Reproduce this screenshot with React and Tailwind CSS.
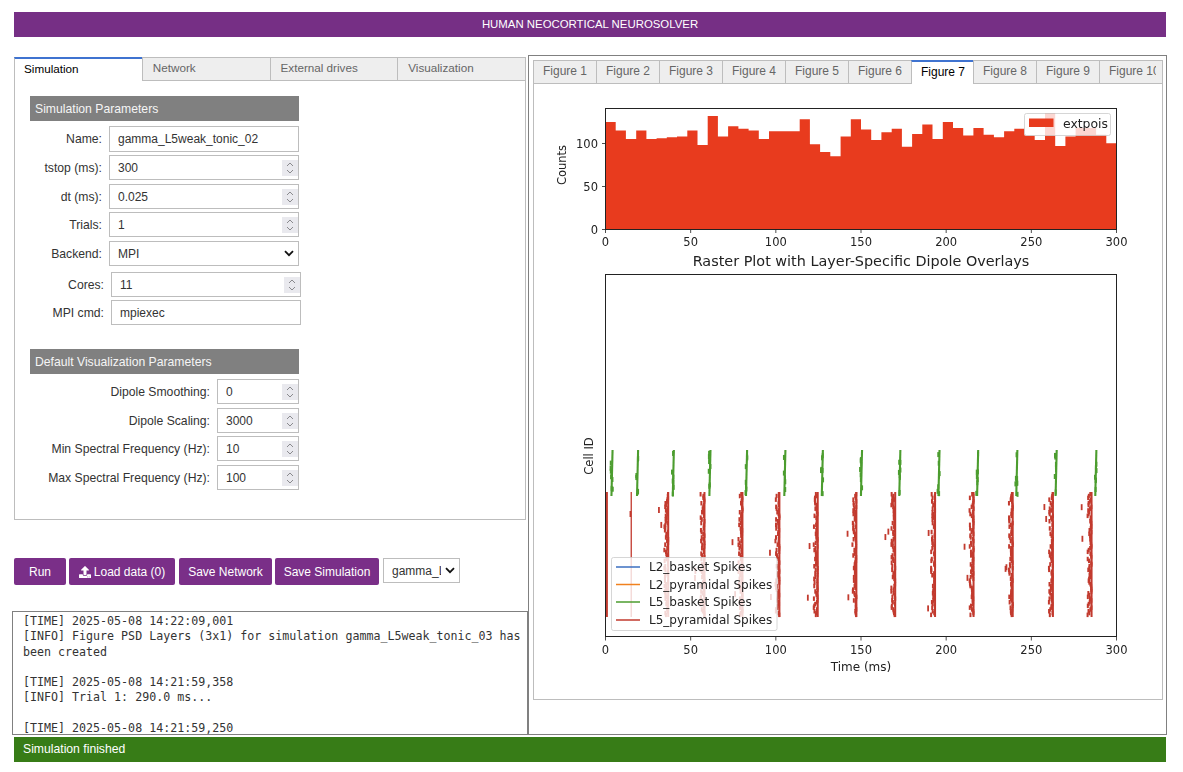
import React from "react";
import { FaUpload } from "react-icons/fa";

const counts = [125,115,105,115,105,106,107,108,115,98,132,108,120,117,115,105,114,114,114,128,99,90,85,108,128,116,104,113,117,96,111,122,105,125,118,109,118,110,107,114,117,109,104,135,97,108,118,118,110,100];

function rng(seed) {
  let s = seed;
  return () => {
    s = (s * 1664525 + 1013904223) % 4294967296;
    return s / 4294967296;
  };
}

const X = (ms) => 605.7 + ms * 1.703;
const greenBursts = [3.5, 18.5, 39.5, 61, 82.5, 105, 127, 150, 172.5, 195.5, 218.2, 241.2, 264.3, 287.6];
const redBursts = [36.7, 58, 80.3, 102, 124.5, 147.2, 170, 193.4, 216, 239, 262.6, 285.3];

function Raster() {
  const r = rng(42);
  const segs = [];
  greenBursts.forEach((b, bi) => {
    const cx = X(b);
    segs.push(<line key={`gm${bi}`} x1={cx + 0.9} x2={cx - 0.2} y1={450} y2={496} stroke="#4c9d2f" strokeWidth="2.1" />);
    for (let i = 0; i < 7; i++) {
      const y = 450 + r() * 42;
      const dx = (r() - 0.5) * 2.2;
      segs.push(<line key={`g${bi}-${i}`} x1={cx + dx} x2={cx + dx} y1={y} y2={y + 5} stroke="#4c9d2f" strokeWidth="2" />);
    }
  });
  segs.push(<line key="r0" x1={X(0.7)} x2={X(0.7)} y1={492} y2={617} stroke="#c23a2e" strokeWidth="2" />);
  segs.push(<line key="r1" x1={X(15)} x2={X(15)} y1={492} y2={617} stroke="#c23a2e" strokeWidth="1.3" />);
  segs.push(<line key="r2" x1={X(14.5)} x2={X(14.5)} y1={511} y2={517} stroke="#c23a2e" strokeWidth="1.7" />);
  redBursts.forEach((b, bi) => {
    const right = X(b);
    segs.push(<line key={`rm${bi}`} x1={right} x2={right} y1={492} y2={617} stroke="#c23a2e" strokeWidth="2" />);
    for (let y = 492; y < 613; y += 1.8) {
      const n = r();
      const off = Math.pow(n, 1.5) * 4;
      segs.push(<line key={`r${bi}-${y}`} x1={right - off} x2={right - off} y1={y} y2={y + 4.5} stroke="#c23a2e" strokeWidth="2" />);
    }
    for (let i = 0; i < 2; i++) {
      const y = 497 + r() * 110;
      const off = 6 + r() * 4;
      segs.push(<line key={`ro${bi}-${i}`} x1={right - off} x2={right - off} y1={y} y2={y + 6} stroke="#c23a2e" strokeWidth="1.8" />);
    }
  });
  return <g>{segs}</g>;
}

const chartFont = { fontFamily: "'DejaVu Sans', sans-serif" };

function Chart() {
  const ticks = [0, 50, 100, 150, 200, 250, 300];
  const binW = 511 / 50;
  let d = "M605 229.5";
  counts.forEach((c, i) => {
    const y = (229 - c * 0.857).toFixed(1);
    d += ` L${(605.5 + i * binW).toFixed(1)} ${y} L${(605.5 + (i + 1) * binW).toFixed(1)} ${y}`;
  });
  d += " L1116.5 229.5 Z";
  return (
    <svg className="block blur-[0.3px]" width="628" height="615" viewBox="534 84 628 615" style={chartFont}>
      <path d={d} fill="#e83b1e" />
      <rect x="605.5" y="108.5" width="511" height="121" fill="none" stroke="#222" strokeWidth="1" />
      {ticks.map((t) => {
        const x = 605.5 + (t / 300) * 511;
        return (
          <g key={t}>
            <line x1={x} x2={x} y1={229.5} y2={233} stroke="#222" strokeWidth="0.8" />
            <text x={x} y={246} textAnchor="middle" fontSize="11.5" fill="#222">{t}</text>
          </g>
        );
      })}
      {[[0, 229.5], [50, 186.5], [100, 143.5]].map(([t, y]) => (
        <g key={t}>
          <line x1={602} x2={605} y1={y} y2={y} stroke="#222" strokeWidth="0.8" />
          <text x={598} y={y + 4.5} textAnchor="end" fontSize="11.5" fill="#222">{t}</text>
        </g>
      ))}
      <text x={0} y={0} transform="translate(566 165) rotate(-90)" textAnchor="middle" fontSize="11.5" fill="#222">Counts</text>
      <rect x="1024.5" y="113.5" width="86" height="22" rx="2" fill="#fff" fillOpacity="0.8" stroke="#ccc" strokeWidth="0.8" />
      <rect x="1029" y="118.5" width="24.5" height="8.5" fill="#e83b1e" />
      <text x="1063" y="128" fontSize="12.4" fill="#222">extpois</text>

      <text x="861" y="266" textAnchor="middle" fontSize="14.4" fill="#222">Raster Plot with Layer-Specific Dipole Overlays</text>
      <Raster />
      <rect x="605.5" y="274.5" width="511" height="362" fill="none" stroke="#222" strokeWidth="1" />
      {ticks.map((t) => {
        const x = 605.5 + (t / 300) * 511;
        return (
          <g key={t}>
            <line x1={x} x2={x} y1={637} y2={640.5} stroke="#222" strokeWidth="0.8" />
            <text x={x} y={654} textAnchor="middle" fontSize="11.5" fill="#222">{t}</text>
          </g>
        );
      })}
      <text x={0} y={0} transform="translate(593 456) rotate(-90)" textAnchor="middle" fontSize="11.5" fill="#222">Cell ID</text>
      <text x="861" y="671" textAnchor="middle" fontSize="12" fill="#222">Time (ms)</text>

      <rect x="611.5" y="557.5" width="165.5" height="73" rx="2" fill="#fff" fillOpacity="0.8" stroke="#ccc" strokeWidth="0.8" />
      {[
        ["L2_basket Spikes", "#3b6fc0", 567],
        ["L2_pyramidal Spikes", "#f0811e", 584.5],
        ["L5_basket Spikes", "#4c9d2f", 602],
        ["L5_pyramidal Spikes", "#c23a2e", 620],
      ].map(([label, color, y]) => (
        <g key={label}>
          <line x1="616" x2="640" y1={y} y2={y} stroke={color} strokeWidth="1.5" />
          <text x="649" y={y + 4} fontSize="12" fill="#222">{label}</text>
        </g>
      ))}
    </svg>
  );
}

function Spinner() {
  return (
    <div className="absolute right-[1px] top-1/2 flex h-[16px] w-[16px] -translate-y-1/2 items-center justify-center bg-[#e9e9ee]">
      <svg width="10" height="14" viewBox="0 0 10 14" fill="none" stroke="#8a8a8e" strokeWidth="1">
        <path d="M2 5 L5 2 L8 5" />
        <path d="M2 9 L5 12 L8 9" />
      </svg>
    </div>
  );
}

function Field({ value, spin, w = "w-[190px]", h = "h-[25px]" }) {
  return (
    <div className={`relative ${w} ${h}`}>
      <input
        readOnly
        value={value}
        className="block h-full w-full border border-[#bdbdbd] bg-white pl-[8px] text-[12px] text-[#333] outline-none"
      />
      {spin && <Spinner />}
    </div>
  );
}

function Row({ label, children, className = "" }) {
  return (
    <div className={`flex items-center ${className}`}>
      <div className="w-[72px] shrink-0 pt-[1px] text-right text-[12.2px] whitespace-nowrap text-[#333]">{label}</div>
      <div className="ml-[7px]">{children}</div>
    </div>
  );
}

function WideRow({ label, value, className = "" }) {
  return (
    <div className={`flex w-[269px] items-center justify-end ${className}`}>
      <div className="mr-[7px] pt-[1px] text-right text-[12.2px] text-[#333]">{label}</div>
      <Field value={value} spin w="w-[82px]" />
    </div>
  );
}

function Header({ children, className = "" }) {
  return (
    <div className={`flex h-[25px] w-[269px] items-center bg-[#808080] pl-[5px] pt-[1px] text-[12.2px] text-[#f5f5f5] ${className}`}>
      {children}
    </div>
  );
}

function Btn({ children, w }) {
  return (
    <button className={`flex h-[27px] ${w} items-center justify-center gap-[3px] rounded-[2px] bg-[#7a2f88] text-[12px] text-white`}>
      {children}
    </button>
  );
}

export default function App() {
  const leftTabs = ["Simulation", "Network", "External drives", "Visualization"];
  const figs = ["Figure 1", "Figure 2", "Figure 3", "Figure 4", "Figure 5", "Figure 6", "Figure 7", "Figure 8", "Figure 9", "Figure 10"];
  return (
    <div className="h-[772px] w-[1183px] overflow-hidden bg-white pl-[14px] pt-[12px]" style={{ fontFamily: "'Liberation Sans', Arial, sans-serif" }}>
      <div className="flex h-[25px] w-[1152px] items-center justify-center bg-[#762f85] text-[11.4px] text-white">
        HUMAN NEOCORTICAL NEUROSOLVER
      </div>
      <div className="mt-[18px] flex items-start">
        <div className="w-[514px] pt-[2px]">
          <div className="w-[512px]">
            <div className="flex h-[24px]">
              {leftTabs.map((t, i) => (
                <div
                  key={t}
                  className={
                    i === 0
                      ? "flex h-[24px] w-[129px] items-center border-x border-t-2 border-[#bdbdbd] border-t-[#3f73d0] bg-white pb-[3px] pl-[9px] text-[11.7px] text-black"
                      : "-ml-px flex h-[24px] w-[129px] items-center border border-[#bdbdbd] bg-[#eeeeee] pb-[2px] pl-[10px] text-[11.7px] text-[#666]"
                  }
                >
                  {t}
                </div>
              ))}
            </div>
            <div className="-mt-px h-[440px] border border-t-0 border-[#bdbdbd] pl-[15px] pt-[16px]">
              <Header>Simulation Parameters</Header>
              <Row label="Name:" className="mt-[5px]"><Field value="gamma_L5weak_tonic_02" h="h-[26px]" /></Row>
              <Row label="tstop (ms):" className="mt-[3px]"><Field value="300" spin /></Row>
              <Row label="dt (ms):" className="mt-[4px]"><Field value="0.025" spin /></Row>
              <Row label="Trials:" className="mt-[3px]"><Field value="1" spin /></Row>
              <Row label="Backend:" className="mt-[4px]">
                <div className="relative h-[25px] w-[190px]">
                  <select className="block h-full w-full appearance-none border border-[#bdbdbd] bg-white pl-[8px] text-[12px] text-[#333] outline-none">
                    <option>MPI</option>
                  </select>
                  <svg className="absolute right-[5px] top-[9px]" width="10" height="7" viewBox="0 0 10 7" fill="none" stroke="#111" strokeWidth="1.8"><path d="M1 1.2 L5 5.2 L9 1.2" /></svg>
                </div>
              </Row>
              <Row label="Cores:" className="ml-[2px] mt-[6px]"><Field value="11" spin /></Row>
              <Row label="MPI cmd:" className="ml-[2px] mt-[3px]"><Field value="mpiexec" /></Row>
              <Header className="mt-[24px]">Default Visualization Parameters</Header>
              <WideRow label="Dipole Smoothing:" value="0" className="mt-[5px]" />
              <WideRow label="Dipole Scaling:" value="3000" className="mt-[4px]" />
              <WideRow label="Min Spectral Frequency (Hz):" value="10" className="mt-[3px]" />
              <WideRow label="Max Spectral Frequency (Hz):" value="100" className="mt-[4px]" />
            </div>
          </div>
          <div className="mt-[38px] flex items-start">
            <Btn w="w-[52px]">Run</Btn>
            <div className="ml-[3px]"><Btn w="w-[106px]"><FaUpload size={12} />Load data (0)</Btn></div>
            <div className="ml-[4px]"><Btn w="w-[93px]">Save Network</Btn></div>
            <div className="ml-[3px]"><Btn w="w-[104px]">Save Simulation</Btn></div>
            <div className="relative ml-[4px] h-[25px] w-[77px]">
              <select className="block h-full w-full appearance-none border border-[#bdbdbd] bg-white pl-[8px] pr-[18px] text-[12px] text-[#333] outline-none">
                <option>gamma_L5weak_tonic_02</option>
              </select>
              <svg className="absolute right-[5px] top-[9px]" width="10" height="7" viewBox="0 0 10 7" fill="none" stroke="#111" strokeWidth="1.8"><path d="M1 1.2 L5 5.2 L9 1.2" /></svg>
            </div>
          </div>
          <div
            className="-ml-[2px] mt-[26px] h-[124px] w-[516px] overflow-hidden border border-[#808080] pl-[10px] pr-[4px] pt-[2px] text-[11.65px] leading-[15.3px] whitespace-pre-wrap text-[#333]"
            style={{ fontFamily: "'DejaVu Sans Mono', monospace" }}
          >
            {"[TIME] 2025-05-08 14:22:09,001\n[INFO] Figure PSD Layers (3x1) for simulation gamma_L5weak_tonic_03 has been created\n\n[TIME] 2025-05-08 14:21:59,358\n[INFO] Trial 1: 290.0 ms...\n\n[TIME] 2025-05-08 14:21:59,250"}
          </div>
        </div>
        <div className="h-[680px] w-[639px] border border-[#808080] pl-[4px] pt-[4px]">
          <div className="flex h-[24px] w-[630px] overflow-hidden">
            {figs.map((f, i) => (
              <div
                key={f}
                className={
                  i === 6
                    ? "-ml-px flex h-[24px] w-[63px] shrink-0 items-center border-x border-t-2 border-[#bdbdbd] border-t-[#3f73d0] bg-white pb-[3px] pl-[9px] text-[12px] text-black"
                    : "-ml-px flex h-[24px] w-[64px] shrink-0 items-center border border-[#bdbdbd] bg-[#eeeeee] pb-[2px] pl-[9px] text-[12px] text-[#666] first:ml-0"
                }
              >
                <span className={i === 9 ? "block w-[47px] overflow-hidden whitespace-nowrap" : "block w-[51px] overflow-hidden whitespace-nowrap"}>{f}</span>
              </div>
            ))}
          </div>
          <div className="-mt-px h-[617px] w-[630px] border border-t-0 border-[#bdbdbd] pt-px">
            <Chart />
          </div>
        </div>
      </div>
      <div className="mt-[2px] flex h-[25px] w-[1152px] items-center bg-[#377c17] pl-[9px] text-[12.2px] text-white">
        Simulation finished
      </div>
    </div>
  );
}
